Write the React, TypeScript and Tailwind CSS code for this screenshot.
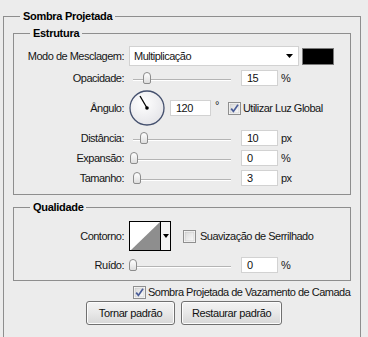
import React from 'react';

const font = { fontFamily: '"Liberation Sans", Arial, sans-serif' };

const Check = ({ checked }: { checked: boolean }) => (
    <svg width="13" height="13" viewBox="0 0 13 13" className="shrink-0">
        <defs>
            <linearGradient id="cb" x1="0" y1="0" x2="1" y2="1">
                <stop offset="0" stopColor="#d9d9d9" />
                <stop offset="1" stopColor="#fbfbfb" />
            </linearGradient>
        </defs>
        <rect x="0.5" y="0.5" width="12" height="12" fill="#fff" stroke="#8f8f8f" />
        <rect x="2" y="2" width="9" height="9" fill="url(#cb)" stroke="#c4c4c4" strokeWidth="0.6" />
        {checked && (
            <path d="M3.2 6.6 L5.4 9.4 L10 2.8" fill="none" stroke="#4a5d98" strokeWidth="1.7" />
        )}
    </svg>
);

const Slider = ({ pos }: { pos: number }) => (
    <div className="relative h-[16px] w-[102px] shrink-0">
        {/* track */}
        <div className="absolute left-[4px] right-0 top-[9px] h-[2px] border-t border-[#b4b4b4] bg-white" />
        {/* thumb */}
        <div
            className="absolute top-[2px] h-[12px] w-[8px] rounded-t-[4px] rounded-b-[2px] border border-[#8c8c8c] bg-gradient-to-b from-white to-[#dedede]"
            style={{ left: pos }}
        />
    </div>
);

const NumBox = ({ value, w = 37 }: { value: string; w?: number }) => (
    <div
        className="flex h-[16px] shrink-0 items-center border border-[#d2d2d2] bg-white pl-[5px] text-[11px] leading-none text-[#111]"
        style={{ width: w }}
    >
        {value}
    </div>
);

const Label = ({ children }: { children: React.ReactNode }) => (
    <span className="w-[110px] shrink-0 whitespace-nowrap text-right">{children}</span>
);

const SliderRow = ({ label, pos, value, unit }: { label: string; pos: number; value: string; unit: string }) => (
    <div className="mt-[4px] flex h-[16px] items-center">
        <Label>{label}</Label>
        <div className="ml-[5px]">
            <Slider pos={pos} />
        </div>
        <div className="ml-[10px]">
            <NumBox value={value} />
        </div>
        <span className="ml-[3px]">{unit}</span>
    </div>
);

const Dial = () => (
    <svg width="36" height="36" viewBox="0 0 36 36" className="shrink-0">
        <defs>
            <radialGradient id="dial" cx="0.4" cy="0.35" r="0.7">
                <stop offset="0" stopColor="#ffffff" />
                <stop offset="1" stopColor="#e4e4e8" />
            </radialGradient>
        </defs>
        <circle cx="18" cy="18" r="17" fill="url(#dial)" stroke="#44506e" strokeWidth="1.3" />
        <line x1="18" y1="18" x2="11" y2="6" stroke="#000" strokeWidth="1.3" />
        <circle cx="18" cy="18" r="1.8" fill="#000" />
    </svg>
);

const ContourBox = () => (
    <div className="flex h-[30px] w-[42px] shrink-0 border border-black bg-white">
        <svg width="30" height="28" viewBox="0 0 30 28">
            <polygon points="1,28 30,0 30,28" fill="#8e8e8e" />
        </svg>
        <div className="flex flex-1 items-center justify-center border-l border-black bg-[#f4f4f4]">
            <svg width="6" height="4" viewBox="0 0 6 4">
                <polygon points="0,0 6,0 3,4" fill="#000" />
            </svg>
        </div>
    </div>
);

const Button = ({ children, w }: { children: React.ReactNode; w: number }) => (
    <button
        type="button"
        className="h-[24px] whitespace-nowrap rounded-[3px] border border-[#707070] bg-gradient-to-b from-[#f3f3f3] via-[#e8e8e8] to-[#d7d7d7] text-[11px] tracking-[-0.4px] text-[#111] shadow-[inset_0_0_0_1px_#fcfcfc]"
        style={{ width: w }}
    >
        {children}
    </button>
);

export default function App() {
    return (
        <div className="h-[337px] w-[368px] overflow-hidden bg-[#ececec] pl-[3px] pt-[10px] text-[11px] leading-[13px] tracking-[-0.5px] text-[#151515]" style={font}>
            <fieldset className="h-[340px] w-[358px] border border-[#8e8e8e]">
                <legend className="ml-[16px] px-[3px] font-bold leading-[13px] tracking-[-0.3px] text-black">Sombra Projetada</legend>

                {/* Estrutura */}
                <fieldset className="ml-[9px] mt-[4px] w-[338px] border border-[#8e8e8e] pb-[8px]">
                    <legend className="ml-[16px] px-[3px] font-bold leading-[13px] tracking-[-0.3px] text-black">Estrutura</legend>

                    <div className="mt-[6px] flex h-[20px] items-center">
                        <Label>Modo de Mesclagem:</Label>
                        <div className="ml-[5px] flex h-[20px] w-[170px] items-center justify-between border border-[#d2d2d2] bg-white pl-[4px] pr-[5px]">
                            <span>Multiplicação</span>
                            <svg width="7" height="4" viewBox="0 0 7 4">
                                <polygon points="0,0 7,0 3.5,4" fill="#000" />
                            </svg>
                        </div>
                        <div className="ml-[3px] h-[17px] w-[32px] border border-[#7a7a7a] bg-black" />
                    </div>

                    <SliderRow label="Opacidade:" pos={14} value="15" unit="%" />

                    <div className="mt-[4px] flex h-[36px] items-center">
                        <Label>Ângulo:</Label>
                        <div className="ml-[5px]">
                            <Dial />
                        </div>
                        <div className="ml-[5px]">
                            <NumBox value="120" w={41} />
                        </div>
                        <span className="ml-[4px] -mt-[6px]">°</span>
                        <div className="ml-[9px] flex items-center gap-[2px] whitespace-nowrap">
                            <Check checked />
                            <span>Utilizar Luz Global</span>
                        </div>
                    </div>

                    <SliderRow label="Distância:" pos={11} value="10" unit="px" />
                    <SliderRow label="Expansão:" pos={1} value="0" unit="%" />
                    <SliderRow label="Tamanho:" pos={4} value="3" unit="px" />
                </fieldset>

                {/* Qualidade */}
                <fieldset className="ml-[9px] mt-[6px] w-[338px] border border-[#8e8e8e] pb-[7px]">
                    <legend className="ml-[16px] px-[3px] font-bold leading-[13px] tracking-[-0.3px] text-black">Qualidade</legend>

                    <div className="mt-[7px] flex h-[30px] items-center">
                        <Label>Contorno:</Label>
                        <div className="ml-[5px]">
                            <ContourBox />
                        </div>
                        <div className="ml-[12px] flex items-center gap-[4px] whitespace-nowrap">
                            <Check checked={false} />
                            <span>Suavização de Serrilhado</span>
                        </div>
                    </div>

                    <div className="mt-[6px]">
                        <SliderRow label="Ruído:" pos={0} value="0" unit="%" />
                    </div>
                </fieldset>

                <div className="ml-[129px] mt-[5px] flex h-[13px] items-center gap-[2px] whitespace-nowrap">
                    <Check checked />
                    <span>Sombra Projetada de Vazamento de Camada</span>
                </div>

                <div className="ml-[82px] mt-[2px] flex gap-[6px]">
                    <Button w={89}>Tornar padrão</Button>
                    <Button w={101}>Restaurar padrão</Button>
                </div>
            </fieldset>
        </div>
    );
}
